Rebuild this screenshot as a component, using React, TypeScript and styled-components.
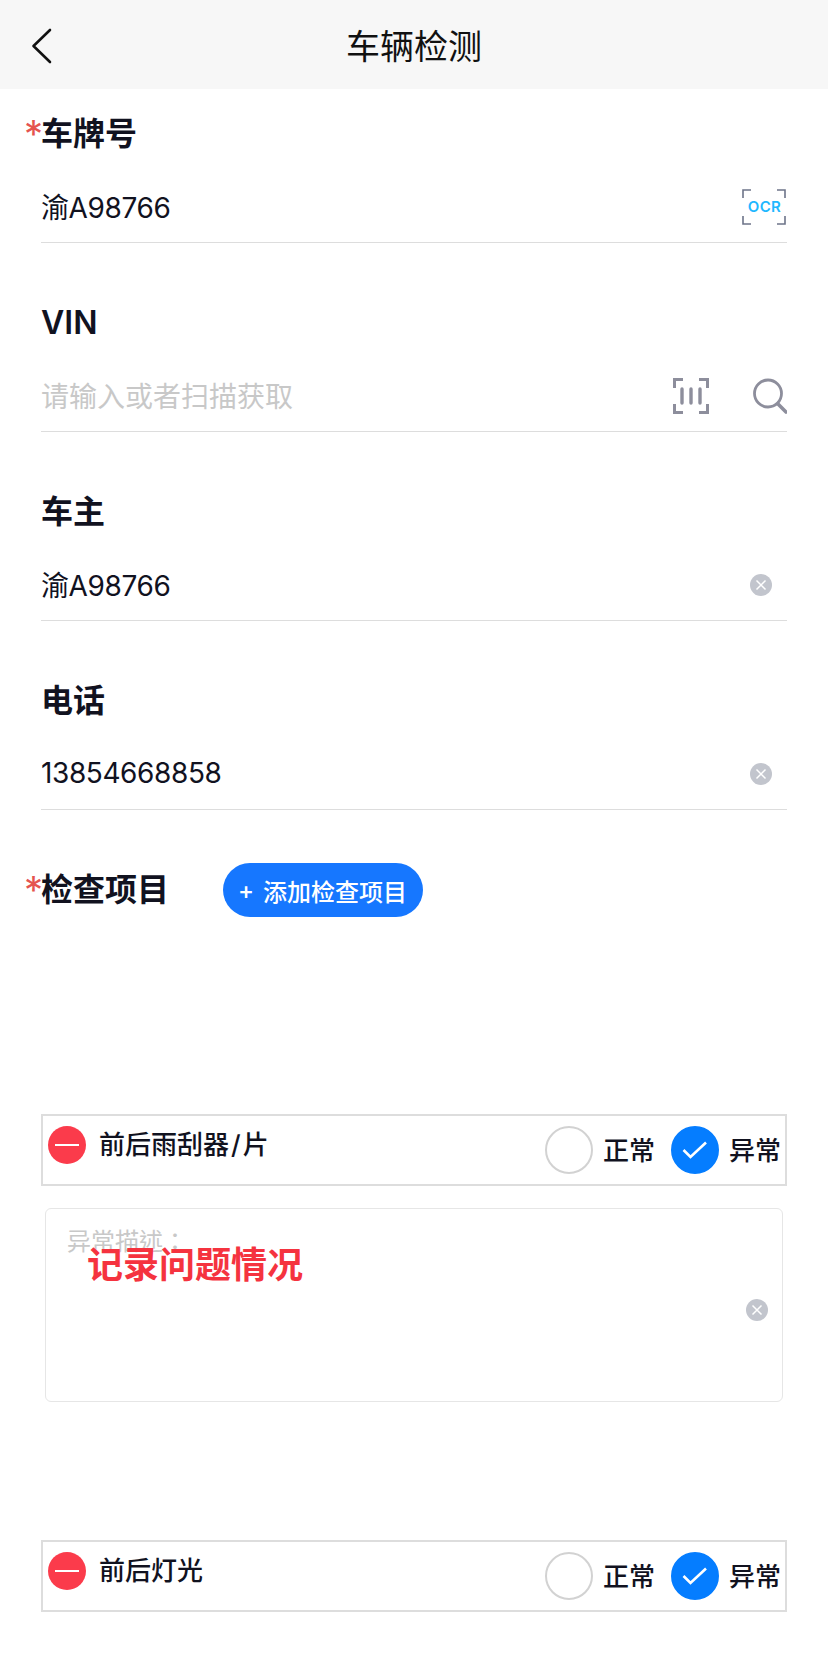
import React from 'react';
import styled, { createGlobalStyle } from 'styled-components';

const GlobalStyle = createGlobalStyle`
    html, body {
        margin: 0;
        padding: 0;
        background: #ffffff;
    }
    body {
        font-family: 'Inter', 'Noto Sans CJK SC', sans-serif;
        color: #11121f;
    }
`;

const Page = styled.div`
    width: 828px;
    height: 1660px;
    overflow: hidden;
    background: #ffffff;
`;

const Header = styled.header`
    height: 89px;
    background: #f7f7f7;
    display: flex;
    align-items: center;
    justify-content: center;
    position: relative;
`;

const BackButton = styled.span`
    position: absolute;
    left: 30px;
    top: 28px;
    width: 24px;
    height: 36px;
    svg {
        display: block;
    }
`;

const Title = styled.h1`
    margin: 0;
    font-size: 34px;
    font-weight: 400;
    color: #111111;
`;

const Form = styled.main`
    padding: 23px 41px 0;
`;

const Field = styled.section`
    margin-bottom: 58px;
`;

const Label = styled.div`
    height: 44px;
    line-height: 44px;
    font-size: 32px;
    font-weight: 600;
`;

const Star = styled.span`
    display: inline-block;
    position: relative;
    top: 3px;
    width: 17px;
    margin-left: -17px;
    font-size: 38px;
    line-height: 0;
    color: #e5544f;
    font-weight: 400;
`;

const InputRow = styled.div`
    box-sizing: border-box;
    height: 87px;
    padding-top: 15px;
    border-bottom: 1px solid #dddddd;
    display: flex;
    align-items: center;
    justify-content: space-between;
`;

const Value = styled.span<{ $placeholder?: boolean }>`
    position: relative;
    top: -1px;
    font-size: 28px;
    letter-spacing: ${(p) => (p.$placeholder ? '0' : '-0.4px')};
    color: ${(p) => (p.$placeholder ? '#c8c8c8' : '#11121f')};
`;

const Icons = styled.div`
    display: flex;
    align-items: center;
    gap: 44px;
`;

const ClearDot = styled.span<{ $inset?: number }>`
    width: 22px;
    height: 22px;
    border-radius: 50%;
    background: #c2c5cd;
    display: flex;
    align-items: center;
    justify-content: center;
    margin-right: ${(p) => p.$inset ?? 15}px;
`;

const CheckHead = styled.div`
    display: flex;
    align-items: center;
    height: 54px;
    margin-top: -5px;
`;

const CheckLabel = styled(Label)`
    width: 182px;
`;

const AddButton = styled.button`
    width: 200px;
    height: 54px;
    border: none;
    border-radius: 27px;
    background: #1677ff;
    color: #ffffff;
    font-family: inherit;
    font-size: 24px;
    font-weight: 500;
    display: flex;
    align-items: center;
    justify-content: flex-start;
    gap: 9px;
    padding: 0 0 0 15px;
`;

const Item = styled.div<{ $top: number }>`
    box-sizing: border-box;
    height: 72px;
    margin-top: ${(p) => p.$top}px;
    border: 2px solid #dddddd;
    padding: 0 4px 0 5px;
    display: flex;
    align-items: center;
    justify-content: space-between;
`;

const ItemName = styled.div`
    display: flex;
    align-items: center;
    gap: 13px;
    margin-bottom: 10px;
    font-size: 26px;
    font-weight: 500;
`;

const ItemText = styled.span`
    position: relative;
    top: -3px;
`;

const Slash = styled.span`
    margin: 0 2px;
`;

const MinusDot = styled.span`
    width: 38px;
    height: 38px;
    border-radius: 50%;
    background: #fb3b4b;
    display: flex;
    align-items: center;
    justify-content: center;
    &::after {
        content: '';
        width: 24px;
        height: 2px;
        background: #ffffff;
    }
`;

const Choices = styled.div`
    display: flex;
    align-items: center;
    gap: 16px;
`;

const Choice = styled.label`
    display: flex;
    align-items: center;
    gap: 10px;
    font-size: 26px;
    font-weight: 500;
`;

const ChoiceText = styled.span`
    position: relative;
    top: -2px;
`;

const RadioMark = styled.span<{ $checked?: boolean }>`
    box-sizing: border-box;
    width: 48px;
    height: 48px;
    border-radius: 50%;
    border: 2px solid ${(p) => (p.$checked ? '#057dff' : '#d2d2d2')};
    background: ${(p) => (p.$checked ? '#057dff' : '#ffffff')};
    display: flex;
    align-items: center;
    justify-content: center;
`;

const Description = styled.div`
    box-sizing: border-box;
    height: 194px;
    margin: 22px 4px 0 4px;
    padding: 15px 15px 0 21px;
    border: 1px solid #e6e6e6;
    border-radius: 6px;
    position: relative;
`;

const Hint = styled.div`
    font-family: 'Noto Sans CJK TC', sans-serif;
    font-size: 24px;
    line-height: 32px;
    color: #c8c8c8;
`;

const Annotation = styled.div`
    position: absolute;
    left: 41px;
    top: 32px;
    font-size: 36px;
    line-height: 48px;
    font-weight: 600;
    color: #f5333f;
`;

const DescriptionClear = styled.span`
    position: absolute;
    right: 14px;
    top: 90px;
`;

const ChevronLeft = () => (
    <svg width="24" height="36" viewBox="0 0 24 36" fill="none">
        <path d="M20 2 L3.5 18 L20 34" stroke="#111111" strokeWidth="2.6" strokeLinecap="round" strokeLinejoin="round" />
    </svg>
);

const OcrIcon = () => (
    <svg width="44" height="36" viewBox="0 0 44 36" fill="none" style={{ marginRight: 1 }}>
        <path
            d="M9 1 H1 V9 M35 1 H43 V9 M1 27 V35 H9 M43 27 V35 H35"
            stroke="#6d7489"
            strokeWidth="1.6"
        />
        <text
            x="22.5"
            y="23"
            textAnchor="middle"
            fontFamily="Inter, sans-serif"
            fontWeight="600"
            fontSize="15"
            letterSpacing="0.4"
            fill="#1fb8ff"
        >
            OCR
        </text>
    </svg>
);

const ScanIcon = () => (
    <svg width="36" height="36" viewBox="0 0 36 36" fill="none">
        <path
            d="M10 1.5 H1.5 V10 M26 1.5 H34.5 V10 M1.5 26 V34.5 H10 M34.5 26 V34.5 H26"
            stroke="#8d8e9c"
            strokeWidth="3"
        />
        <path d="M9 11 V25 M18 11 V25 M27 11 V25" stroke="#8d8e9c" strokeWidth="3.4" strokeLinecap="round" />
    </svg>
);

const SearchIcon = () => (
    <svg width="34" height="36" viewBox="0 0 34 36" fill="none">
        <circle cx="15" cy="15.5" r="13.5" stroke="#8d8e9c" strokeWidth="2.8" />
        <path d="M25 26 L33 34" stroke="#8d8e9c" strokeWidth="3.6" strokeLinecap="round" />
    </svg>
);

const CrossIcon = () => (
    <svg width="12" height="12" viewBox="0 0 12 12" fill="none">
        <path d="M1.5 1.5 L10.5 10.5 M10.5 1.5 L1.5 10.5" stroke="#ffffff" strokeWidth="1.5" />
    </svg>
);

const CheckIcon = () => (
    <svg width="26" height="20" viewBox="0 0 26 20" fill="none">
        <path d="M1.5 10 L8.5 17 L24 2.5" stroke="#ffffff" strokeWidth="2.6" />
    </svg>
);

const TextField = ({ label, required, value, placeholder, children }: {
    label: string;
    required?: boolean;
    value?: string;
    placeholder?: string;
    children: React.ReactNode;
}) => (
    <Field>
        <Label>
            {required && <Star>*</Star>}
            {label}
        </Label>
        <InputRow>
            <Value $placeholder={!value}>{value || placeholder}</Value>
            <Icons>{children}</Icons>
        </InputRow>
    </Field>
);

const CheckItem = ({ children, top }: { children: React.ReactNode; top: number }) => (
    <Item $top={top}>
        <ItemName>
            <MinusDot />
            <ItemText>{children}</ItemText>
        </ItemName>
        <Choices>
            <Choice>
                <RadioMark />
                <ChoiceText>正常</ChoiceText>
            </Choice>
            <Choice>
                <RadioMark $checked>
                    <CheckIcon />
                </RadioMark>
                <ChoiceText>异常</ChoiceText>
            </Choice>
        </Choices>
    </Item>
);

export default function App() {
    return (
        <Page>
            <GlobalStyle />
            <Header>
                <BackButton>
                    <ChevronLeft />
                </BackButton>
                <Title>车辆检测</Title>
            </Header>
            <Form>
                <TextField label="车牌号" required value="渝A98766">
                    <OcrIcon />
                </TextField>
                <TextField label="VIN" placeholder="请输入或者扫描获取">
                    <ScanIcon />
                    <SearchIcon />
                </TextField>
                <TextField label="车主" value="渝A98766">
                    <ClearDot>
                        <CrossIcon />
                    </ClearDot>
                </TextField>
                <TextField label="电话" value="13854668858">
                    <ClearDot>
                        <CrossIcon />
                    </ClearDot>
                </TextField>
                <CheckHead>
                    <CheckLabel>
                        <Star>*</Star>
                        检查项目
                    </CheckLabel>
                    <AddButton>
                        <span>+</span>
                        添加检查项目
                    </AddButton>
                </CheckHead>
                <CheckItem top={197}>
                    前后雨刮器<Slash>/</Slash>片
                </CheckItem>
                <Description>
                    <Hint>异常描述：</Hint>
                    <Annotation>记录问题情况</Annotation>
                    <DescriptionClear>
                        <ClearDot $inset={0}>
                            <CrossIcon />
                        </ClearDot>
                    </DescriptionClear>
                </Description>
                <CheckItem top={138}>前后灯光</CheckItem>
            </Form>
        </Page>
    );
}
